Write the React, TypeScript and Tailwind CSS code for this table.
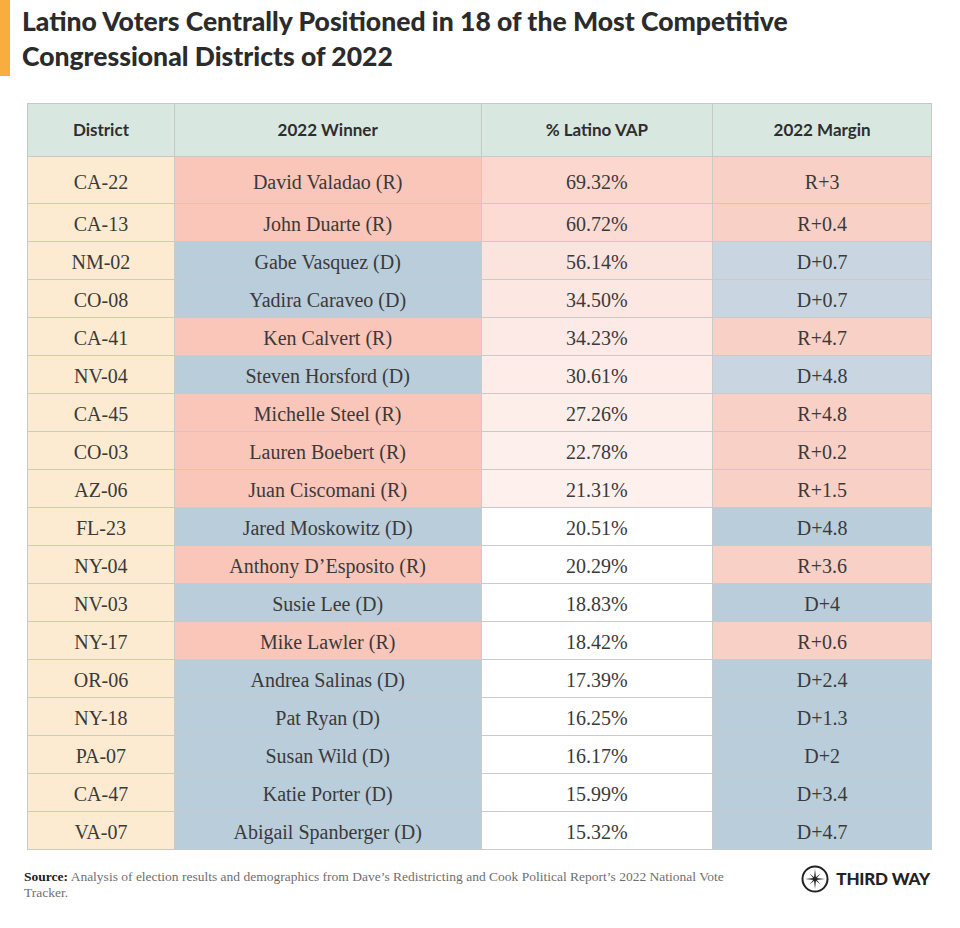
const rows: [string, string, string, string, string, string][] = [
  // district, winner, vap, margin, vap bg, margin bg
  ["CA-22", "David Valadao (R)", "69.32%", "R+3", "#fbd7ce", "#f9d0c6"],
  ["CA-13", "John Duarte (R)", "60.72%", "R+0.4", "#fbdbd3", "#f9d0c6"],
  ["NM-02", "Gabe Vasquez (D)", "56.14%", "D+0.7", "#fce4de", "#c9d6e2"],
  ["CO-08", "Yadira Caraveo (D)", "34.50%", "D+0.7", "#fce7e2", "#c9d6e2"],
  ["CA-41", "Ken Calvert (R)", "34.23%", "R+4.7", "#fdeae6", "#f9d0c6"],
  ["NV-04", "Steven Horsford (D)", "30.61%", "D+4.8", "#fdece8", "#c9d6e2"],
  ["CA-45", "Michelle Steel (R)", "27.26%", "R+4.8", "#fdeeea", "#f9d0c6"],
  ["CO-03", "Lauren Boebert (R)", "22.78%", "R+0.2", "#fdefec", "#f9d0c6"],
  ["AZ-06", "Juan Ciscomani (R)", "21.31%", "R+1.5", "#fdf0ed", "#f9d0c6"],
  ["FL-23", "Jared Moskowitz (D)", "20.51%", "D+4.8", "#ffffff", "#bacddb"],
  ["NY-04", "Anthony D’Esposito (R)", "20.29%", "R+3.6", "#ffffff", "#f9d0c6"],
  ["NV-03", "Susie Lee (D)", "18.83%", "D+4", "#ffffff", "#bacddb"],
  ["NY-17", "Mike Lawler (R)", "18.42%", "R+0.6", "#ffffff", "#f9d0c6"],
  ["OR-06", "Andrea Salinas (D)", "17.39%", "D+2.4", "#ffffff", "#bacddb"],
  ["NY-18", "Pat Ryan (D)", "16.25%", "D+1.3", "#ffffff", "#bacddb"],
  ["PA-07", "Susan Wild (D)", "16.17%", "D+2", "#ffffff", "#bacddb"],
  ["CA-47", "Katie Porter (D)", "15.99%", "D+3.4", "#ffffff", "#bacddb"],
  ["VA-07", "Abigail Spanberger (D)", "15.32%", "D+4.7", "#ffffff", "#bacddb"],
];

const sans = { fontFamily: "Lato, 'Open Sans', sans-serif" };
const serif = { fontFamily: "'Liberation Serif', 'DejaVu Serif', serif" };

const Logo = () => (
  <svg width="28" height="28" viewBox="0 0 28 28">
    <circle cx="14" cy="14" r="12.5" fill="none" stroke="#222" strokeWidth="2" />
    <path d="M14 4 L15 13 L24 14 L15 15 L14 24 L13 15 L4 14 L13 13 Z" fill="#222" />
    <path d="M8.5 8.5 L14 13 L19.5 8.5 L15 14 L19.5 19.5 L14 15 L8.5 19.5 L13 14 Z" fill="#222" />
  </svg>
);

const App = () => {
  return (
    <div className="w-[960px] h-[928px] bg-white relative">
      <div className="flex">
        <div className="w-[10px] h-[76px] bg-[#f8ad3f]" />
        <h1
          className="pl-3 pt-[4px] text-[26.5px] leading-[35px] font-black text-[#2b2b2b]"
          style={sans}
        >
          Latino Voters Centrally Positioned in 18 of the Most Competitive
          <br />
          Congressional Districts of 2022
        </h1>
      </div>

      <div className="pl-[27px] pt-[27px]">
        <table className="border-collapse w-[905px] text-[#3a3a3a]">
          <colgroup>
            <col className="w-[147px]" />
            <col className="w-[307px]" />
            <col className="w-[232px]" />
            <col className="w-[219px]" />
          </colgroup>
          <thead>
            <tr className="h-[53px] bg-[#d9e7e1] text-[17px] font-black text-[#2e2e2e]" style={sans}>
              <th className="border border-[#c6c9c8]">District</th>
              <th className="border border-[#c6c9c8]">2022 Winner</th>
              <th className="border border-[#c6c9c8]">% Latino VAP</th>
              <th className="border border-[#c6c9c8]">2022 Margin</th>
            </tr>
          </thead>
          <tbody className="text-[20px] text-center" style={serif}>
            {rows.map(([d, w, v, m, vb, mb], i) => (
              <tr key={d} className={i === 0 ? "h-[47px]" : "h-[38px]"}>
                <td className={"border border-[#cacaca] bg-[#fdebd1] " + (i === 0 ? "pt-[4px]" : "pt-[3px]")}>{d}</td>
                <td
                  className={
                    "border border-[#cacaca] pt-[3px] " +
                    (w.endsWith("(R)") ? "bg-[#f9c6b9]" : "bg-[#bacddb]")
                  }
                >
                  {w}
                </td>
                <td className="border border-[#cacaca] pt-[3px]" style={{ backgroundColor: vb }}>
                  {v}
                </td>
                <td className="border border-[#cacaca] pt-[3px]" style={{ backgroundColor: mb }}>
                  {m}
                </td>
              </tr>
            ))}
          </tbody>
        </table>
      </div>

      <div className="flex justify-between items-start pl-[24px] pr-[30px] pt-[19px]">
        <p className="w-[705px] text-[13.5px] leading-[16px] text-[#6f6f6f]" style={serif}>
          <span className="font-bold text-[#222]">Source:</span> Analysis of election results and
          demographics from Dave’s Redistricting and Cook Political Report’s 2022 National Vote
          Tracker.
        </p>
        <div className="flex items-center gap-[7px] -mt-[4px]">
          <Logo />
          <span className="text-[17px] font-black tracking-[-0.2px] text-[#222]" style={sans}>
            THIRD WAY
          </span>
        </div>
      </div>
    </div>
  );
};

export default App;
